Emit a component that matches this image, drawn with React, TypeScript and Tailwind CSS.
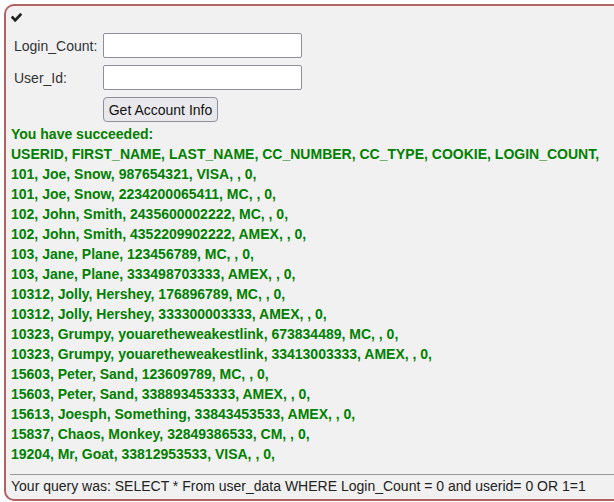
import React from 'react';

const rows = [
  'USERID, FIRST_NAME, LAST_NAME, CC_NUMBER, CC_TYPE, COOKIE, LOGIN_COUNT,',
  '101, Joe, Snow, 987654321, VISA, , 0,',
  '101, Joe, Snow, 2234200065411, MC, , 0,',
  '102, John, Smith, 2435600002222, MC, , 0,',
  '102, John, Smith, 4352209902222, AMEX, , 0,',
  '103, Jane, Plane, 123456789, MC, , 0,',
  '103, Jane, Plane, 333498703333, AMEX, , 0,',
  '10312, Jolly, Hershey, 176896789, MC, , 0,',
  '10312, Jolly, Hershey, 333300003333, AMEX, , 0,',
  '10323, Grumpy, youaretheweakestlink, 673834489, MC, , 0,',
  '10323, Grumpy, youaretheweakestlink, 33413003333, AMEX, , 0,',
  '15603, Peter, Sand, 123609789, MC, , 0,',
  '15603, Peter, Sand, 338893453333, AMEX, , 0,',
  '15613, Joesph, Something, 33843453533, AMEX, , 0,',
  '15837, Chaos, Monkey, 32849386533, CM, , 0,',
  '19204, Mr, Goat, 33812953533, VISA, , 0,',
];

export default function App() {
  return (
    <div className="w-screen h-screen overflow-hidden bg-white pl-[4px] pt-[4px] font-['Liberation_Sans',Arial,sans-serif] text-[14px] text-[#333]">
      <div className="w-[660px] h-[497px] border-2 border-r-0 border-[#b16262] rounded-l-[10px] bg-[#f1f1f1] pl-[5px]">
        {/* status icon */}
        <div className="pt-[7px] h-[16px]">
          <svg width="11" height="9" viewBox="121 334 1550 1188" preserveAspectRatio="none" className="block">
            <path
              fill="#222"
              d="M1671 566q0 40-28 68l-724 724-136 136q-28 28-68 28t-68-28l-136-136-362-362q-28-28-28-68t28-68l136-136q28-28 68-28t68 28l294 295 656-657q28-28 68-28t68 28l136 136q28 28 28 68z"
            />
          </svg>
        </div>

        {/* form */}
        <div className="mt-[11px]">
          <div className="flex items-center">
            <label className="w-[92px] pl-[3px] leading-[20px]">Login_Count:</label>
            <input className="w-[199px] h-[25px] bg-white border border-[#8f8f9d] rounded-[2px]" />
          </div>
          <div className="flex items-center mt-[7px]">
            <label className="w-[92px] pl-[3px] leading-[20px]">User_Id:</label>
            <input className="w-[199px] h-[25px] bg-white border border-[#8f8f9d] rounded-[2px]" />
          </div>
          <div className="ml-[92px] mt-[7px]">
            <button className="w-[115px] h-[25px] bg-[#e9e9ed] border border-[#8f8f9d] rounded-[4px] text-[#111] leading-[20px]">
              Get Account Info
            </button>
          </div>
        </div>

        {/* results */}
        <div className="mt-[2px] text-[#008000] font-bold leading-[20px] whitespace-nowrap">
          <div>You have succeeded:</div>
          {rows.map((r, i) => (
            <div key={i}>{r}</div>
          ))}
        </div>

        <div className="mt-[10px] -ml-[1px] h-[2px] border-t border-[#9a9a9a] border-b border-b-[#eeeeee]" />
        <div className="leading-[20px] text-[#222] whitespace-nowrap">
          Your query was: SELECT * From user_data WHERE Login_Count = 0 and userid= 0 OR 1=1
        </div>
      </div>
    </div>
  );
}
